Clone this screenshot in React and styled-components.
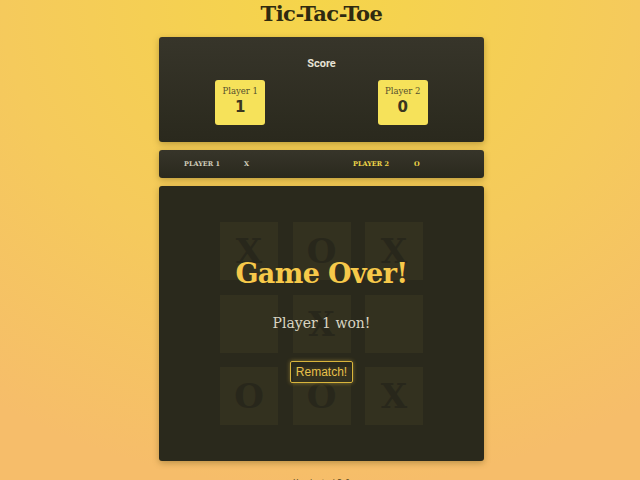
import React from "react";
import styled, { createGlobalStyle } from "styled-components";

const GlobalStyle = createGlobalStyle`
  html, body {
    margin: 0;
    padding: 0;
  }
  body {
    min-height: 480px;
    background: radial-gradient(ellipse 90% 100% at 50% 0%, #f5d54a 0%, #f5ca5c 55%, #f6bd6a 100%);
    font-family: "DejaVu Serif", serif;
    overflow: hidden;
  }
`;

const Page = styled.div`
  width: 325px;
  margin: 0 auto;
  padding-left: 3px;
  display: flex;
  flex-direction: column;
  gap: 8px;
`;

const Title = styled.h1`
  margin: 0;
  height: 29px;
  text-align: center;
  font-family: "DejaVu Serif", serif;
  font-weight: 900;
  font-size: 21px;
  line-height: 28px;
  letter-spacing: -0.5px;
  color: #2f2a10;
`;

const Panel = styled.section`
  position: relative;
  background: linear-gradient(180deg, #37352a 0%, #2a291d 100%);
  border-radius: 3px;
  box-shadow: 0 2px 6px rgba(80, 60, 10, 0.35);
`;

const ScorePanel = styled(Panel)`
  height: 105px;
  display: flex;
  flex-direction: column;
  align-items: stretch;
`;

const ScoreHeading = styled.div`
  margin-top: 20px;
  text-align: center;
  font-family: Roboto, "Noto Sans", sans-serif;
  font-weight: 700;
  font-size: 11px;
  color: #e6e2d6;
`;

const Cards = styled.div`
  margin-top: 10px;
  display: flex;
  justify-content: space-around;
`;

const Card = styled.div`
  width: 50px;
  height: 45px;
  background: #f6e25a;
  border-radius: 3px;
  display: flex;
  flex-direction: column;
  align-items: center;
  box-sizing: border-box;
  padding-top: 6px;
  color: #3a3520;
`;

const CardName = styled.div`
  font-size: 8.5px;
  color: #55502e;
`;

const CardScore = styled.div`
  margin-top: 2px;
  font-family: "DejaVu Sans", sans-serif;
  font-weight: 700;
  font-size: 15px;
`;

const TurnBar = styled(Panel)`
  height: 28px;
  display: grid;
  grid-template-columns: 60px 109px 61px auto;
  align-items: center;
  padding-left: 25px;
`;

const TurnText = styled.span`
  font-size: 6.5px;
  font-weight: 700;
  text-transform: uppercase;
  color: ${p => (p.$active ? "#f0d84a" : "#d2cebc")};
`;

const Board = styled(Panel)`
  height: 275px;
  display: flex;
  align-items: center;
  justify-content: center;
  background: #2a291c;
`;

const Grid = styled.div`
  display: grid;
  grid-template-columns: repeat(3, 58px);
  grid-auto-rows: 58px;
  gap: 14.5px;
`;

const Cell = styled.div`
  background: #33311f;
  display: flex;
  align-items: center;
  justify-content: center;
  font-family: "DejaVu Serif", serif;
  font-weight: 900;
  font-size: 34px;
  color: #28271b;
`;

const Overlay = styled.div`
  position: absolute;
  inset: 0;
  display: flex;
  flex-direction: column;
  align-items: center;
  padding-top: 72px;
  box-sizing: border-box;
`;

const OverTitle = styled.div`
  font-family: "DejaVu Serif", serif;
  font-weight: 900;
  font-size: 27px;
  line-height: 32px;
  letter-spacing: -0.6px;
  color: #f7c94a;
`;

const WinText = styled.div`
  margin-top: 25px;
  font-family: "DejaVu Serif", serif;
  font-size: 14px;
  color: #d8d4c2;
`;

const Rematch = styled.button`
  margin-top: 30px;
  width: 63px;
  height: 22px;
  padding: 0;
  background: transparent;
  border: 1px solid #d9b53c;
  border-radius: 2px;
  box-shadow: 0 0 4px rgba(240, 200, 70, 0.45);
  font-family: "Liberation Sans", Arial, sans-serif;
  font-size: 12px;
  color: #e7c04a;
`;

const Footer = styled.div`
  margin-top: 10px;
  text-align: center;
  font-family: "DejaVu Sans", sans-serif;
  font-size: 8px;
  color: #5a4a22;
`;

const board = ["X", "O", "X", "", "X", "", "O", "O", "X"];

export default function App() {
  return (
    <>
      <GlobalStyle />
      <Page>
        <Title>Tic-Tac-Toe</Title>
        <ScorePanel>
          <ScoreHeading>Score</ScoreHeading>
          <Cards>
            <Card>
              <CardName>Player 1</CardName>
              <CardScore>1</CardScore>
            </Card>
            <Card>
              <CardName>Player 2</CardName>
              <CardScore>0</CardScore>
            </Card>
          </Cards>
        </ScorePanel>
        <TurnBar>
          <TurnText>Player 1</TurnText>
          <TurnText>X</TurnText>
          <TurnText $active>Player 2</TurnText>
          <TurnText $active>O</TurnText>
        </TurnBar>
        <Board>
          <Grid>
            {board.map((mark, i) => (
              <Cell key={i}>{mark}</Cell>
            ))}
          </Grid>
          <Overlay>
            <OverTitle>Game Over!</OverTitle>
            <WinText>Player 1 won!</WinText>
            <Rematch>Rematch!</Rematch>
          </Overlay>
        </Board>
        <Footer>X selected 2.0</Footer>
      </Page>
    </>
  );
}
